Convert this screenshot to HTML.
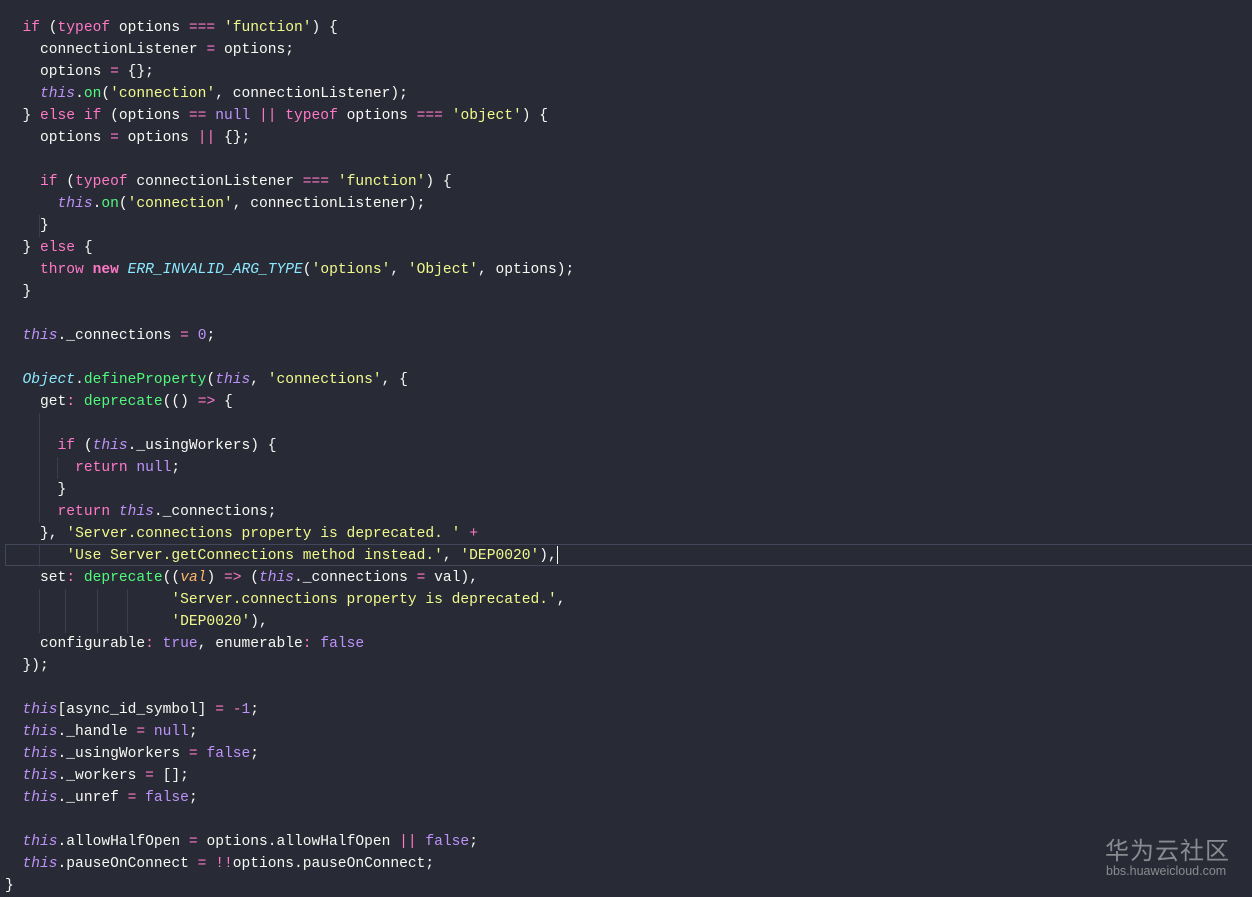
<!DOCTYPE html>
<html><head><meta charset="utf-8"><style>
html,body{margin:0;padding:0;background:#282a36;width:1252px;height:897px;overflow:hidden;position:relative}
pre{position:absolute;left:5px;top:17px;margin:0;font-family:"Liberation Mono",monospace;font-size:14.6px;line-height:22px;color:#f8f8f2}
.k{color:#ff79c6}.t{color:#bd93f9;font-style:italic}.s{color:#f1fa8c}.f{color:#50fa7b}.n{color:#bd93f9}.c{color:#8be9fd;font-style:italic}.p{color:#ffb86c;font-style:italic}.b{color:#ff79c6;font-weight:bold}
.cur{position:absolute;left:5px;top:544px;width:1250px;height:22px;border:1px solid #44475a;box-sizing:border-box}
.g{position:absolute;width:1px;background:#3c3e4c}
.wm{position:absolute;left:1105px;top:834px;color:#8a8b90;font-family:"Noto Sans CJK SC",sans-serif;font-size:24px;letter-spacing:1px;line-height:30px}
.wm2{position:absolute;left:1106px;top:864px;color:#8a8b90;font-family:"Liberation Sans",sans-serif;font-size:12.5px}
.caret{position:absolute;left:557px;top:546px;width:1px;height:18px;background:#f8f8f2}
</style></head><body>
<div class="cur"></div><div class="caret"></div>
<div class="g" style="left:39px;top:215px;height:22px"></div>
<div class="g" style="left:39px;top:413px;height:110px"></div>
<div class="g" style="left:39px;top:545px;height:22px"></div>
<div class="g" style="left:39px;top:589px;height:44px"></div>
<div class="g" style="left:65px;top:589px;height:44px"></div>
<div class="g" style="left:97px;top:589px;height:44px"></div>
<div class="g" style="left:127px;top:589px;height:44px"></div>
<div class="g" style="left:57px;top:457px;height:22px"></div>
<pre>  <span class="k">if</span> (<span class="k">typeof</span> options <span class="k">===</span> <span class="s">'function'</span>) {
    connectionListener <span class="k">=</span> options;
    options <span class="k">=</span> {};
    <span class="t">this</span>.<span class="f">on</span>(<span class="s">'connection'</span>, connectionListener);
  } <span class="k">else if</span> (options <span class="k">==</span> <span class="n">null</span> <span class="k">||</span> <span class="k">typeof</span> options <span class="k">===</span> <span class="s">'object'</span>) {
    options <span class="k">=</span> options <span class="k">||</span> {};

    <span class="k">if</span> (<span class="k">typeof</span> connectionListener <span class="k">===</span> <span class="s">'function'</span>) {
      <span class="t">this</span>.<span class="f">on</span>(<span class="s">'connection'</span>, connectionListener);
    }
  } <span class="k">else</span> {
    <span class="k">throw</span> <span class="b">new</span> <span class="c">ERR_INVALID_ARG_TYPE</span>(<span class="s">'options'</span>, <span class="s">'Object'</span>, options);
  }

  <span class="t">this</span>._connections <span class="k">=</span> <span class="n">0</span>;

  <span class="c">Object</span>.<span class="f">defineProperty</span>(<span class="t">this</span>, <span class="s">'connections'</span>, {
    get<span class="k">:</span> <span class="f">deprecate</span>(() <span class="k">=&gt;</span> {

      <span class="k">if</span> (<span class="t">this</span>._usingWorkers) {
        <span class="k">return</span> <span class="n">null</span>;
      }
      <span class="k">return</span> <span class="t">this</span>._connections;
    }, <span class="s">'Server.connections property is deprecated. '</span> <span class="k">+</span>
       <span class="s">'Use Server.getConnections method instead.'</span>, <span class="s">'DEP0020'</span>),
    set<span class="k">:</span> <span class="f">deprecate</span>((<span class="p">val</span>) <span class="k">=&gt;</span> (<span class="t">this</span>._connections <span class="k">=</span> val),
                   <span class="s">'Server.connections property is deprecated.'</span>,
                   <span class="s">'DEP0020'</span>),
    configurable<span class="k">:</span> <span class="n">true</span>, enumerable<span class="k">:</span> <span class="n">false</span>
  });

  <span class="t">this</span>[async_id_symbol] <span class="k">=</span> <span class="k">-</span><span class="n">1</span>;
  <span class="t">this</span>._handle <span class="k">=</span> <span class="n">null</span>;
  <span class="t">this</span>._usingWorkers <span class="k">=</span> <span class="n">false</span>;
  <span class="t">this</span>._workers <span class="k">=</span> [];
  <span class="t">this</span>._unref <span class="k">=</span> <span class="n">false</span>;

  <span class="t">this</span>.allowHalfOpen <span class="k">=</span> options.allowHalfOpen <span class="k">||</span> <span class="n">false</span>;
  <span class="t">this</span>.pauseOnConnect <span class="k">=</span> <span class="k">!!</span>options.pauseOnConnect;
}</pre>
<div class="wm">华为云社区</div>
<div class="wm2">bbs.huaweicloud.com</div>
</body></html>
